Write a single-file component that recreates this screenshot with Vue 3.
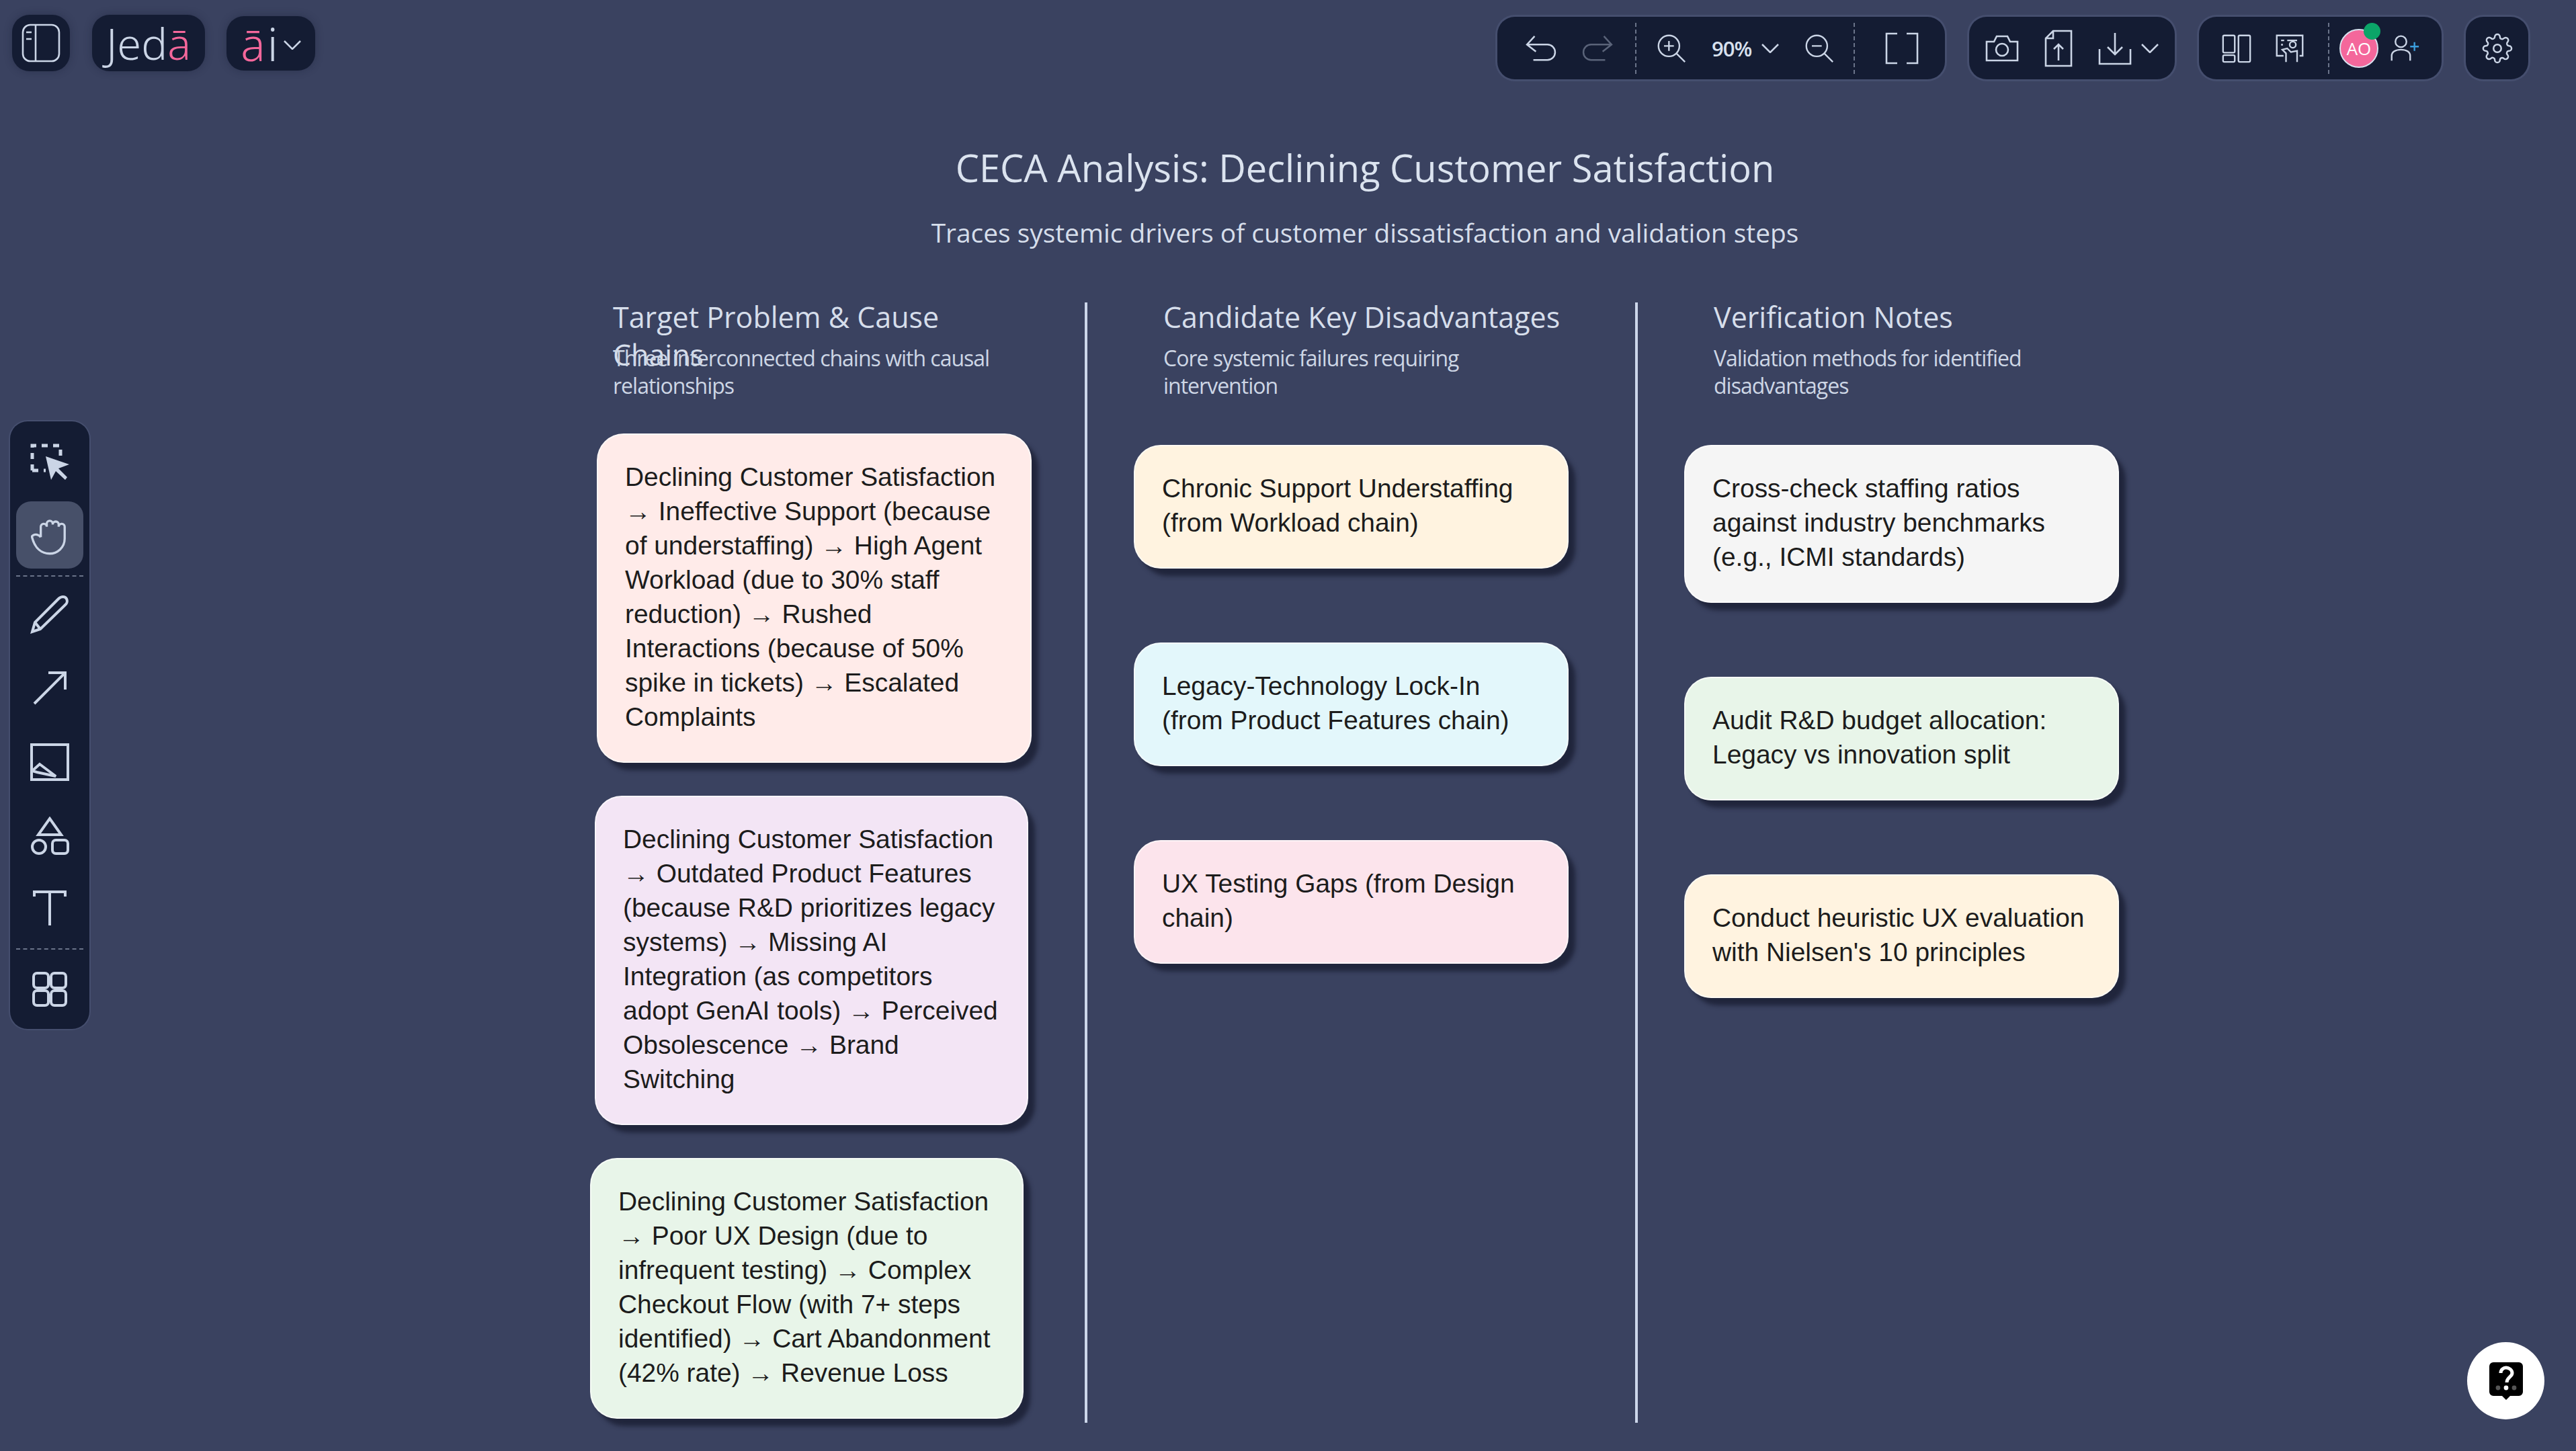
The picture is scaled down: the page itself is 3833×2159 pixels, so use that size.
<script setup>
const chains = [
  { text: 'Declining Customer Satisfaction → Ineffective Support (because of understaffing) → High Agent Workload (due to 30% staff reduction) → Rushed Interactions (because of 50% spike in tickets) → Escalated Complaints', cls: 'rose' },
  { text: 'Declining Customer Satisfaction → Outdated Product Features (because R&D prioritizes legacy systems) → Missing AI Integration (as competitors adopt GenAI tools) → Perceived Obsolescence → Brand Switching', cls: 'lilac' },
  { text: 'Declining Customer Satisfaction → Poor UX Design (due to infrequent testing) → Complex Checkout Flow (with 7+ steps identified) → Cart Abandonment (42% rate) → Revenue Loss', cls: 'mint' }
]

const disadvantages = [
  { text: 'Chronic Support Understaffing (from Workload chain)', cls: 'peach' },
  { text: 'Legacy-Technology Lock-In (from Product Features chain)', cls: 'sky' },
  { text: 'UX Testing Gaps (from Design chain)', cls: 'blush' }
]

const notes = [
  { text: 'Cross-check staffing ratios against industry benchmarks (e.g., ICMI standards)', cls: 'grey' },
  { text: 'Audit R&D budget allocation: Legacy vs innovation split', cls: 'mint' },
  { text: "Conduct heuristic UX evaluation with Nielsen's 10 principles", cls: 'peach' }
]
</script>

<template>
  <div class="app">
    <!-- Top bar -->
    <header class="topbar">
      <div class="top-left">
        <button class="chip square">
          <svg class="ico" viewBox="0 0 58 58"><rect x="2" y="2" width="54" height="54" rx="11" /><path d="M21 2v54M7 13h8M7 23h8" /></svg>
        </button>
        <div class="chip logo">Jed<span class="pink">ā</span></div>
        <div class="chip logo small">
          <span class="pink">ā</span><span>i</span>
          <svg class="caret" viewBox="0 0 26 14"><path d="M1 1l12 12L25 1" /></svg>
        </div>
      </div>
      <div class="top-right">
        <div class="bar">
          <svg class="ico w47" viewBox="0 0 48 42"><path d="M14 2L2 15l14 11M2 15h32a12 12 0 0 1 0 24H12" /></svg>
          <svg class="ico w47 dim" viewBox="0 0 48 42"><path d="M34 2l12 13-14 11M46 15H14a12 12 0 0 0 0 24h22" /></svg>
          <i class="vsep first"></i>
          <svg class="ico after-sep" viewBox="0 0 48 48"><circle cx="20" cy="20" r="17" /><path d="M32 32l14 14M20 12v16M12 20h16" /></svg>
          <span class="zoom-val">90%</span>
          <svg class="caret" viewBox="0 0 26 14"><path d="M1 1l12 12L25 1" /></svg>
          <svg class="ico" viewBox="0 0 48 48"><circle cx="20" cy="20" r="17" /><path d="M32 32l14 14M12 20h16" /></svg>
          <i class="vsep tight"></i>
          <svg class="ico full" viewBox="0 0 50 48"><path d="M18 2H2v44h16M32 2h16v44H32" /></svg>
        </div>
        <div class="bar second">
          <svg class="ico w50" viewBox="0 0 50 40"><path d="M2 10h11l4-8h16l4 8h11v28H2z" /><circle cx="25" cy="22" r="9" /></svg>
          <svg class="ico file" viewBox="0 0 42 56"><path d="M13 2h27v52H2V13zM13 2v11H2M21 46V22M14 29l7-7 7 7" /></svg>
          <svg class="ico w50 tall" viewBox="0 0 50 50"><path d="M25 2v32M14 23l11 11 11-11M2 26v22h46V26" /></svg>
          <svg class="caret" viewBox="0 0 26 14"><path d="M1 1l12 12L25 1" /></svg>
        </div>
        <div class="bar third">
          <svg class="ico" viewBox="0 0 48 48"><rect x="2" y="3" width="19" height="28" rx="2" /><rect x="2" y="35" width="19" height="11" rx="2" /><rect x="27" y="3" width="19" height="43" rx="2" /></svg>
          <svg class="ico" viewBox="0 0 48 48"><path d="M14 36H3V3h42v33h-5M10 11h5M10 18h3M20 11h16" /><circle cx="29" cy="18" r="5" /><path d="M18 46V32l-6-6 8-2 6 6 10-2v18" /></svg>
          <i class="vsep"></i>
          <div class="avatar">AO<i class="dot"></i></div>
          <svg class="ico add-user" viewBox="0 0 48 48"><circle cx="18" cy="13" r="9" /><path d="M3 44V36c0-6 6-10 15-10s15 4 15 10v8" /><path class="blue" d="M40 14v14M33 21h14" /></svg>
        </div>
        <div class="bar solo">
          <svg class="ico gear" viewBox="0 0 24 24"><circle cx="12" cy="12" r="3" /><path d="M19.4 15a1.7 1.7 0 0 0 .3 1.8l.1.1a2 2 0 1 1-2.9 2.9l-.1-.1a1.7 1.7 0 0 0-2.8 1.2V21a2 2 0 1 1-4 0v-.1a1.7 1.7 0 0 0-2.9-1.2l-.1.1a2 2 0 1 1-2.9-2.9l.1-.1a1.7 1.7 0 0 0-1.2-2.8H3a2 2 0 1 1 0-4h.1a1.7 1.7 0 0 0 1.2-2.9l-.1-.1a2 2 0 1 1 2.9-2.9l.1.1a1.7 1.7 0 0 0 1.8.3H9a1.7 1.7 0 0 0 1-1.5V3a2 2 0 1 1 4 0v.1a1.7 1.7 0 0 0 2.9 1.2l.1-.1a2 2 0 1 1 2.9 2.9l-.1.1a1.7 1.7 0 0 0-.3 1.8V9a1.7 1.7 0 0 0 1.5 1H21a2 2 0 1 1 0 4h-.1a1.7 1.7 0 0 0-1.5 1z" /></svg>
        </div>
      </div>
    </header>

    <!-- Tools -->
    <aside class="tools">
      <div class="tool first">
        <svg class="ico" viewBox="0 0 58 58"><path class="dashed" d="M3 40V3h42v15M3 40h20" /><path class="fill" d="M23 19l35 12-16 6 13 13-3 4-14-13-7 13z" /></svg>
      </div>
      <div class="tool active">
        <svg class="ico" viewBox="0 0 50 54"><path d="M13 30V16a4 4 0 0 1 8 0v-4a4 4 0 0 1 8 0v1a4 4 0 0 1 8 0v3a4 4 0 0 1 8 0v16c0 12-10 20-20 20S5 46 1 29c3-4 9-3 12 1" /></svg>
      </div>
      <i class="hsep"></i>
      <div class="tool">
        <svg class="ico" viewBox="0 0 58 58"><path d="M3 55l4-14L42 6c4-4 10-4 12 0s0 8-3 10L15 51z" /><path d="M7 41l8 10" /></svg>
      </div>
      <div class="tool">
        <svg class="ico" viewBox="0 0 58 58"><path d="M6 52L52 6M27 6h25v25" /></svg>
      </div>
      <div class="tool">
        <svg class="ico" viewBox="0 0 58 58"><rect x="2" y="3" width="54" height="52" /><path d="M3 42l11-10 24 18-28-6z" /></svg>
      </div>
      <div class="tool">
        <svg class="ico" viewBox="0 0 58 58"><path d="M29 3l17 24H12z" /><circle cx="13" cy="45" r="10" /><rect x="33" y="35" width="23" height="20" rx="5" /></svg>
      </div>
      <div class="tool letter">
        <svg class="ico" viewBox="0 0 58 58"><path d="M6 12V5h46v7M29 5v50" /></svg>
      </div>
      <i class="hsep second"></i>
      <div class="tool">
        <svg class="ico" viewBox="0 0 58 58"><rect x="5" y="5" width="22" height="22" rx="5" /><rect x="31" y="5" width="22" height="22" rx="5" /><rect x="5" y="31" width="22" height="22" rx="5" /><rect x="31" y="31" width="22" height="22" rx="5" /></svg>
      </div>
    </aside>

    <!-- Diagram -->
    <main class="canvas">
      <h1 class="title">CECA Analysis: Declining Customer Satisfaction</h1>
      <p class="subtitle">Traces systemic drivers of customer dissatisfaction and validation steps</p>

      <div class="columns">
        <section class="column">
          <h2>Target Problem &amp; Cause Chains</h2>
          <p class="col-sub">Three interconnected chains with causal relationships</p>
          <div class="stack tight">
            <div v-for="(c, i) in chains" :key="i" class="card" :class="[c.cls, 'shift' + i]">{{ c.text }}</div>
          </div>
        </section>
        <section class="column">
          <h2>Candidate Key Disadvantages</h2>
          <p class="col-sub">Core systemic failures requiring intervention</p>
          <div class="stack">
            <div v-for="(c, i) in disadvantages" :key="i" class="card" :class="c.cls">{{ c.text }}</div>
          </div>
        </section>
        <section class="column last">
          <h2>Verification Notes</h2>
          <p class="col-sub">Validation methods for identified disadvantages</p>
          <div class="stack">
            <div v-for="(c, i) in notes" :key="i" class="card" :class="c.cls">{{ c.text }}</div>
          </div>
        </section>
      </div>
    </main>

    <button class="help">
      <svg viewBox="0 0 50 56" width="50" height="56">
        <path d="M6 0h38a6 6 0 0 1 6 6v38a6 6 0 0 1-6 6H31l-6 6-6-6H6a6 6 0 0 1-6-6V6a6 6 0 0 1 6-6z" fill="#000" />
        <path d="M17 16c0-5 4-8 8-8s9 3 9 8c0 6-8 6-8 14" fill="none" stroke="#fff" stroke-width="5" />
        <circle cx="25" cy="38" r="3.4" fill="#fff" />
        <circle cx="13" cy="38" r="3.4" fill="#555" />
        <circle cx="37" cy="38" r="3.4" fill="#555" />
      </svg>
    </button>
  </div>
</template>

<style>
html, body {
  margin: 0;
  background: #3a4260;
}
</style>

<style scoped>
.app {
  position: relative;
  width: 3833px;
  height: 2159px;
  overflow: hidden;
  background: #3a4260;
  font-family: "Open Sans", sans-serif;
}

/* Top bar */
.topbar {
  position: absolute;
  top: 22px;
  left: 18px;
  right: 71px;
  display: flex;
  justify-content: space-between;
  align-items: flex-start;
}

.top-left, .top-right {
  display: flex;
  align-items: center;
}

.top-left { gap: 33px; }
.top-right { gap: 36px; margin-top: 3px; }

.chip {
  height: 84px;
  background: #141c33;
  border: none;
  border-radius: 26px;
  display: flex;
  align-items: center;
  justify-content: center;
  color: #cbd5e6;
  box-sizing: border-box;
  box-shadow: 0 0 12px rgba(20, 26, 50, 0.35);
}

.square { width: 86px; padding: 0; }
.square .ico { width: 58px; height: 58px; }

.logo {
  width: 168px;
  font-family: "Noto Sans", sans-serif;
  font-weight: 350;
  font-size: 65px;
}

.logo.small {
  width: 132px;
  height: 81px;
  margin-left: -1px;
  font-size: 68px;
  gap: 3px;
}

.logo.small .caret { margin-left: 5px; margin-top: 6px; }

.pink { color: #f4679b; }

.caret {
  width: 26px;
  height: 14px;
  fill: none;
  stroke: #cbd5e6;
  stroke-width: 2.5;
  flex-shrink: 0;
}

.ico {
  fill: none;
  stroke: #cbd5e6;
  stroke-width: 2.6;
  flex-shrink: 0;
}

.ico .fill { fill: #cbd5e6; stroke: none; }
.ico .dashed { stroke-dasharray: 9 8; stroke-width: 5; }
.dim { stroke: #5a6379; }
.ico .blue { stroke: #3b9ede; }

.bar {
  height: 93px;
  padding: 0 39px 0 42px;
  background: #141c33;
  border-radius: 26px;
  box-shadow: 0 0 0 3px #454e6e;
  display: flex;
  align-items: center;
  gap: 38px;
  box-sizing: border-box;
  color: #d8e0ee;
}

.bar .ico { width: 44px; height: 44px; }
.bar .ico.w47 { width: 46px; height: 40px; }
.bar .ico.w50 { width: 50px; height: 40px; }
.bar .ico.tall { height: 50px; }
.bar .ico.file { width: 42px; height: 56px; }
.bar .ico.full { width: 50px; height: 48px; margin-left: 7px; }
.bar .ico.after-sep { margin-left: -8px; }
.bar .ico.add-user { margin-left: -18px; }
.bar .ico.gear { width: 46px; height: 46px; stroke-width: 1.3; }
.bar .caret { margin-left: -24px; }

.bar.second { padding: 0 24px; }
.bar.third { padding: 0 33px 0 34px; gap: 35px; }
.bar.solo { width: 93px; padding: 0; justify-content: center; }

.vsep {
  width: 0;
  height: 76px;
  border-left: 2px dashed #6a7389;
}

.vsep.first { margin-left: -5px; }
.vsep.tight { margin-left: -9px; }

.zoom-val {
  width: 60px;
  font-size: 31px;
  font-weight: 600;
  letter-spacing: -1px;
  white-space: nowrap;
}

.avatar {
  position: relative;
  width: 58px;
  height: 58px;
  border-radius: 50%;
  background: #f4679b;
  border: 2px solid #d8e0ee;
  box-sizing: border-box;
  display: flex;
  align-items: center;
  justify-content: center;
  color: #fff;
  font-size: 26px;
  margin-left: -20px;
}

.dot {
  position: absolute;
  top: -11px;
  right: -5px;
  width: 25px;
  height: 25px;
  border-radius: 50%;
  background: #0ba568;
}

/* Tool rail */
.tools {
  position: absolute;
  top: 627px;
  left: 15px;
  width: 118px;
  height: 904px;
  background: #141c33;
  border-radius: 26px;
  box-shadow: 0 0 0 2px #454e6e;
  padding: 3px 9px 0;
  box-sizing: border-box;
  display: flex;
  flex-direction: column;
  align-items: center;
}

.tool {
  width: 100px;
  height: 100px;
  margin-bottom: 10px;
  border-radius: 22px;
  display: flex;
  align-items: center;
  justify-content: center;
  flex-shrink: 0;
}

.tool.first { margin-bottom: 16px; padding-top: 18px; box-sizing: border-box; }
.tool.letter { margin-top: -3px; }

.tool .ico { width: 58px; height: 58px; stroke-width: 4; }

.tool.active { background: #475069; }
.tool.active .ico { width: 56px; height: 60px; stroke-width: 3; }

.hsep {
  width: 100%;
  border-top: 2px dashed #6a7389;
  margin: 0 0 6px;
}

.hsep.second { margin: 0 0 9px; }

/* Diagram */
.title {
  position: absolute;
  top: 209px;
  left: 0;
  width: 4062px;
  margin: 0;
  text-align: center;
  font-size: 56px;
  line-height: 80px;
  font-weight: 500;
  color: #dbe3ef;
}

.subtitle {
  position: absolute;
  top: 318px;
  left: 0;
  width: 4062px;
  margin: 0;
  text-align: center;
  font-size: 38.9px;
  line-height: 56px;
  font-weight: 500;
  color: #d6deeb;
}

.columns {
  position: absolute;
  top: 450px;
  left: 799px;
  height: 1667px;
  display: grid;
  grid-template-columns: repeat(3, 819px);
}

.column {
  position: relative;
  border-right: 4px solid #ccd6ea;
  box-sizing: border-box;
}

.column.last { border-right: none; }

h2 {
  height: 56px;
  width: 620px;
  margin: -6px 0 0 113px;
  font-size: 43px;
  line-height: 56px;
  font-weight: 500;
  color: #d6deeb;
}

.col-sub {
  width: 590px;
  margin: 12px 0 0 113px;
  font-size: 32px;
  line-height: 41px;
  font-weight: 500;
  color: #cdd6e5;
  letter-spacing: -1px;
}

.stack {
  display: flex;
  flex-direction: column;
  gap: 110px;
  margin: 68px 0 0 69px;
  align-items: flex-start;
}

.stack.tight {
  gap: 49px;
  margin: 51px 0 0 89px;
}

.card {
  width: 647px;
  box-sizing: border-box;
  padding: 37px 40px 41px;
  border-radius: 40px;
  border: 2px solid rgba(255, 255, 255, 0.6);
  box-shadow: 10px 11px 6px rgba(24, 28, 48, 0.75);
  font-family: "Liberation Sans", Arial, sans-serif;
  font-size: 38.9px;
  line-height: 51px;
  color: #1c1c1c;
}

.shift1 { margin-left: -3px; width: 645px; }
.shift2 { margin-left: -10px; width: 645px; }

.rose { background: #ffebe9; }
.lilac { background: #f3e5f5; }
.mint { background: #e8f5e9; }
.peach { background: #fff3e0; }
.sky { background: #e3f7fb; }
.blush { background: #fce4ec; }
.grey { background: #f5f5f5; }

/* Help */
.help {
  position: absolute;
  left: 3671px;
  top: 1997px;
  width: 115px;
  height: 115px;
  padding: 0;
  border: none;
  border-radius: 50%;
  background: #fff;
  display: flex;
  align-items: center;
  justify-content: center;
}
</style>
